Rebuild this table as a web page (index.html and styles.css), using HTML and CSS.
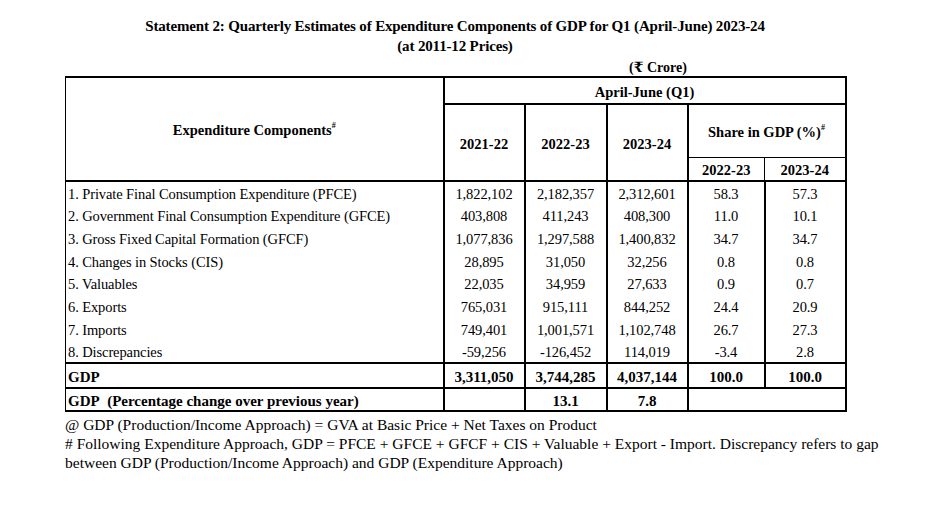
FILE: index.html
```html
<!DOCTYPE html>
<html>
<head>
<meta charset="utf-8">
<link rel="stylesheet" href="styles.css">
</head>
<body>
<div class="page">
  <div class="title">
    <div>Statement 2: Quarterly Estimates of Expenditure Components of GDP for Q1 (April-June) 2023-24</div>
    <div>(at 2011-12 Prices)</div>
  </div>
  <div class="unit">(₹ Crore)</div>
  <table class="stat">
    <colgroup>
      <col class="c1"><col class="c2"><col class="c3"><col class="c4"><col class="c5"><col class="c6">
    </colgroup>
    <thead>
      <tr class="h1">
        <th rowspan="3" class="comp">Expenditure Components<sup>#</sup></th>
        <th colspan="5">April-June (Q1)</th>
      </tr>
      <tr class="h2">
        <th rowspan="2">2021-22</th>
        <th rowspan="2">2022-23</th>
        <th rowspan="2">2023-24</th>
        <th colspan="2" class="share">Share in GDP (%)<sup>#</sup></th>
      </tr>
      <tr class="h3">
        <th>2022-23</th>
        <th class="thin-l">2023-24</th>
      </tr>
    </thead>
    <tbody>
      <tr><td class="lbl">1. Private Final Consumption Expenditure (PFCE)</td><td>1,822,102</td><td>2,182,357</td><td>2,312,601</td><td>58.3</td><td>57.3</td></tr>
      <tr><td class="lbl">2. Government Final Consumption Expenditure (GFCE)</td><td>403,808</td><td>411,243</td><td>408,300</td><td>11.0</td><td>10.1</td></tr>
      <tr><td class="lbl">3. Gross Fixed Capital Formation (GFCF)</td><td>1,077,836</td><td>1,297,588</td><td>1,400,832</td><td>34.7</td><td>34.7</td></tr>
      <tr><td class="lbl">4. Changes in Stocks (CIS)</td><td>28,895</td><td>31,050</td><td>32,256</td><td>0.8</td><td>0.8</td></tr>
      <tr><td class="lbl">5. Valuables</td><td>22,035</td><td>34,959</td><td>27,633</td><td>0.9</td><td>0.7</td></tr>
      <tr><td class="lbl">6. Exports</td><td>765,031</td><td>915,111</td><td>844,252</td><td>24.4</td><td>20.9</td></tr>
      <tr><td class="lbl">7. Imports</td><td>749,401</td><td>1,001,571</td><td>1,102,748</td><td>26.7</td><td>27.3</td></tr>
      <tr><td class="lbl">8. Discrepancies</td><td>-59,256</td><td>-126,452</td><td>114,019</td><td>-3.4</td><td>2.8</td></tr>
      <tr class="total gdp"><td class="lbl">GDP</td><td>3,311,050</td><td>3,744,285</td><td>4,037,144</td><td>100.0</td><td>100.0</td></tr>
      <tr class="total pct"><td class="lbl">GDP&nbsp; (Percentage change over previous year)</td><td></td><td>13.1</td><td>7.8</td><td colspan="2"></td></tr>
    </tbody>
  </table>
  <div class="notes">
    <p>@ GDP (Production/Income Approach) = GVA at Basic Price + Net Taxes on Product</p>
    <p># Following Expenditure Approach, GDP = PFCE + GFCE + GFCF + CIS + Valuable + Export - Import. Discrepancy refers to gap between GDP (Production/Income Approach) and GDP (Expenditure Approach)</p>
  </div>
</div>
</body>
</html>
```

FILE: styles.css
```css
html, body {
  margin: 0;
  padding: 0;
  background: #ffffff;
}
body {
  font-family: "Liberation Serif", "Times New Roman", "DejaVu Serif", serif;
  color: #000;
}
.page {
  padding: 16px 0 0 65px;
}
.title {
  width: 780px;
  text-align: center;
  font-weight: bold;
  font-size: 15px;
  line-height: 20px;
  letter-spacing: -0.15px;
}
.unit {
  width: 780px;
  box-sizing: border-box;
  padding-left: 564px;
  font-weight: bold;
  font-size: 14px;
  line-height: 16px;
  margin-top: 4px;
}
.stat {
  border-collapse: collapse;
  table-layout: fixed;
  width: 780px;
  font-size: 14.5px;
  border-top: 2px solid #000;
  border-right: 2px solid #000;
  border-bottom: 2px solid #000;
  border-left: 1px solid #000;
}
.c1 { width: 378px; }
.c2 { width: 81px; }
.c3 { width: 82px; }
.c4 { width: 81px; }
.c5 { width: 77px; }
.c6 { width: 81px; }
.stat th {
  font-weight: bold;
  font-size: 14.5px;
  padding: 3px 0 0;
  border-left: 2px solid #000;
  border-bottom: 2px solid #000;
  text-align: center;
  vertical-align: middle;
}
.stat th.comp { border-left: 1px solid #000; }
.stat sup {
  font-size: 8px;
  vertical-align: 7px;
  line-height: 0;
}
.h1 { height: 27px; }
.h2 { height: 53px; }
.h3 { height: 24px; }
.stat th.share { border-bottom: 1.5px solid #000; }
.stat th.thin-l { border-left: 1.5px solid #000; }
.stat tbody tr { height: 22.75px; }
.stat td {
  padding: 3px 0 0;
  text-align: center;
  vertical-align: middle;
  border-left: 2px solid #000;
  white-space: nowrap;
  letter-spacing: -0.1px;
}
.stat td.lbl {
  text-align: left;
  padding-left: 2px;
  border-left: 1px solid #000;
}
.stat tr.total td {
  font-weight: bold;
  font-size: 15px;
  letter-spacing: 0;
  border-top: 2px solid #000;
}
.stat tbody tr.gdp { height: 25px; }
.stat tbody tr.pct { height: 23px; }
.notes {
  width: 840px;
  margin-top: 3px;
  font-size: 15.5px;
  line-height: 19px;
}
.notes p { margin: 0; }
```
